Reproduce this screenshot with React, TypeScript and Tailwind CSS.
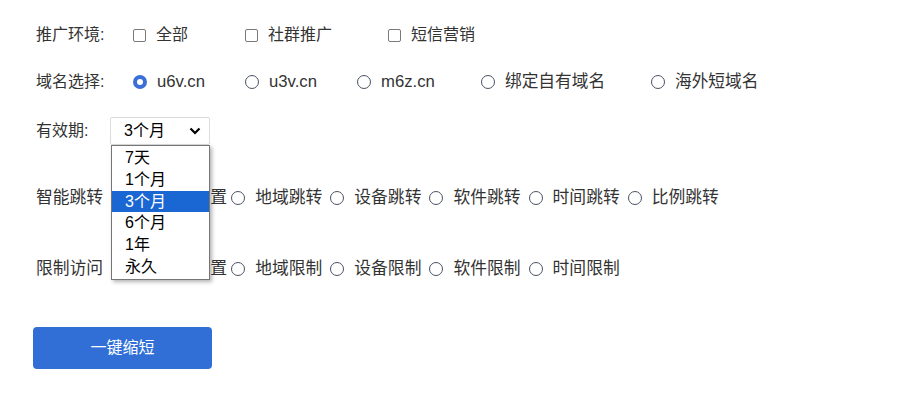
import React from 'react';

const font = "font-['Liberation_Sans','Noto_Sans_CJK_SC',sans-serif]";

function Radio({ checked = false }: { checked?: boolean }) {
  return (
    <span
      className={
        checked
          ? 'inline-block w-[14px] h-[14px] rounded-full border-[4px] border-[#3d6fd8] bg-white shrink-0'
          : 'inline-block w-[14px] h-[14px] rounded-full border-[1.5px] border-[#4b5263] bg-white shrink-0'
      }
    />
  );
}

function Checkbox() {
  return <span className="inline-block w-[13px] h-[13px] rounded-[2px] border border-[#7a7a7a] bg-white shrink-0" />;
}

const domains = [
  { label: 'u6v.cn', w: 'w-[112px]', checked: true },
  { label: 'u3v.cn', w: 'w-[112px]' },
  { label: 'm6z.cn', w: 'w-[124px]' },
  { label: '绑定自有域名', w: 'w-[170px]' },
  { label: '海外短域名', w: '' },
];

const jumps = ['地域跳转', '设备跳转', '软件跳转', '时间跳转', '比例跳转'];
const limits = ['地域限制', '设备限制', '软件限制', '时间限制'];
const periods = ['7天', '1个月', '3个月', '6个月', '1年', '永久'];

function InlineRadios({ items }: { items: string[] }) {
  return (
    <>
      <span className="flex items-center mr-[4px]">
        <Radio />
        <span className="ml-[13px]">默认设置</span>
      </span>
      {items.map((t) => (
        <span key={t} className="flex items-center mr-[8px]">
          <Radio />
          <span className="ml-[10px]">{t}</span>
        </span>
      ))}
    </>
  );
}

export default function App() {
  return (
    <div className={`${font} relative w-[915px] h-[400px] bg-white text-[16px] text-[#333] pl-[33px] pt-[23px]`}>
      <div className="flex items-center h-[24px]">
        <span className="w-[100px] pl-[3px]">推广环境:</span>
        <span className="flex items-center w-[112px]">
          <Checkbox />
          <span className="ml-[10px]">全部</span>
        </span>
        <span className="flex items-center w-[143px]">
          <Checkbox />
          <span className="ml-[10px]">社群推广</span>
        </span>
        <span className="flex items-center">
          <Checkbox />
          <span className="ml-[10px]">短信营销</span>
        </span>
      </div>

      <div className="flex items-center h-[24px] mt-[23px]">
        <span className="w-[100px] pl-[3px]">域名选择:</span>
        {domains.map((d) => (
          <span key={d.label} className={`flex items-center ${d.w}`}>
            <Radio checked={d.checked} />
            <span className="ml-[10px] text-[16.7px]">{d.label}</span>
          </span>
        ))}
      </div>

      <div className="relative flex items-center h-[28px] mt-[23px]">
        <span className="w-[77px] pl-[3px]">有效期:</span>
        <div className="flex items-center justify-between w-[100px] h-[28px] border border-[#dcdcdc] rounded-[2px] pl-[13px] pr-[8px] text-black">
          <span>3个月</span>
          <svg width="12" height="8" viewBox="0 0 12 8">
            <path d="M1.5 1.5 L6 6 L10.5 1.5" fill="none" stroke="#000" strokeWidth="2.2" />
          </svg>
        </div>
        <div className="absolute left-[78px] top-[28px] z-10 w-[99px] border border-[#767676] bg-white shadow-[2px_2px_4px_rgba(0,0,0,0.3)] py-px text-black">
          {periods.map((p) => (
            <div
              key={p}
              className={
                p === '3个月'
                  ? 'h-[21.8px] leading-[21.8px] pl-[13px] bg-[#1a66d2] text-white'
                  : 'h-[21.8px] leading-[21.8px] pl-[13px]'
              }
            >
              {p}
            </div>
          ))}
        </div>
      </div>

      <div className="flex items-center h-[24px] mt-[41px] text-[16.8px]">
        <span className="w-[100px] pl-[3px]">智能跳转</span>
        <InlineRadios items={jumps} />
      </div>

      <div className="flex items-center h-[24px] mt-[47px] text-[16.8px]">
        <span className="w-[100px] pl-[3px]">限制访问</span>
        <InlineRadios items={limits} />
      </div>

      <button className="mt-[46px] w-[179px] h-[42px] rounded-[4px] bg-[#316fd7] text-white text-[16px]">
        一键缩短
      </button>
    </div>
  );
}
